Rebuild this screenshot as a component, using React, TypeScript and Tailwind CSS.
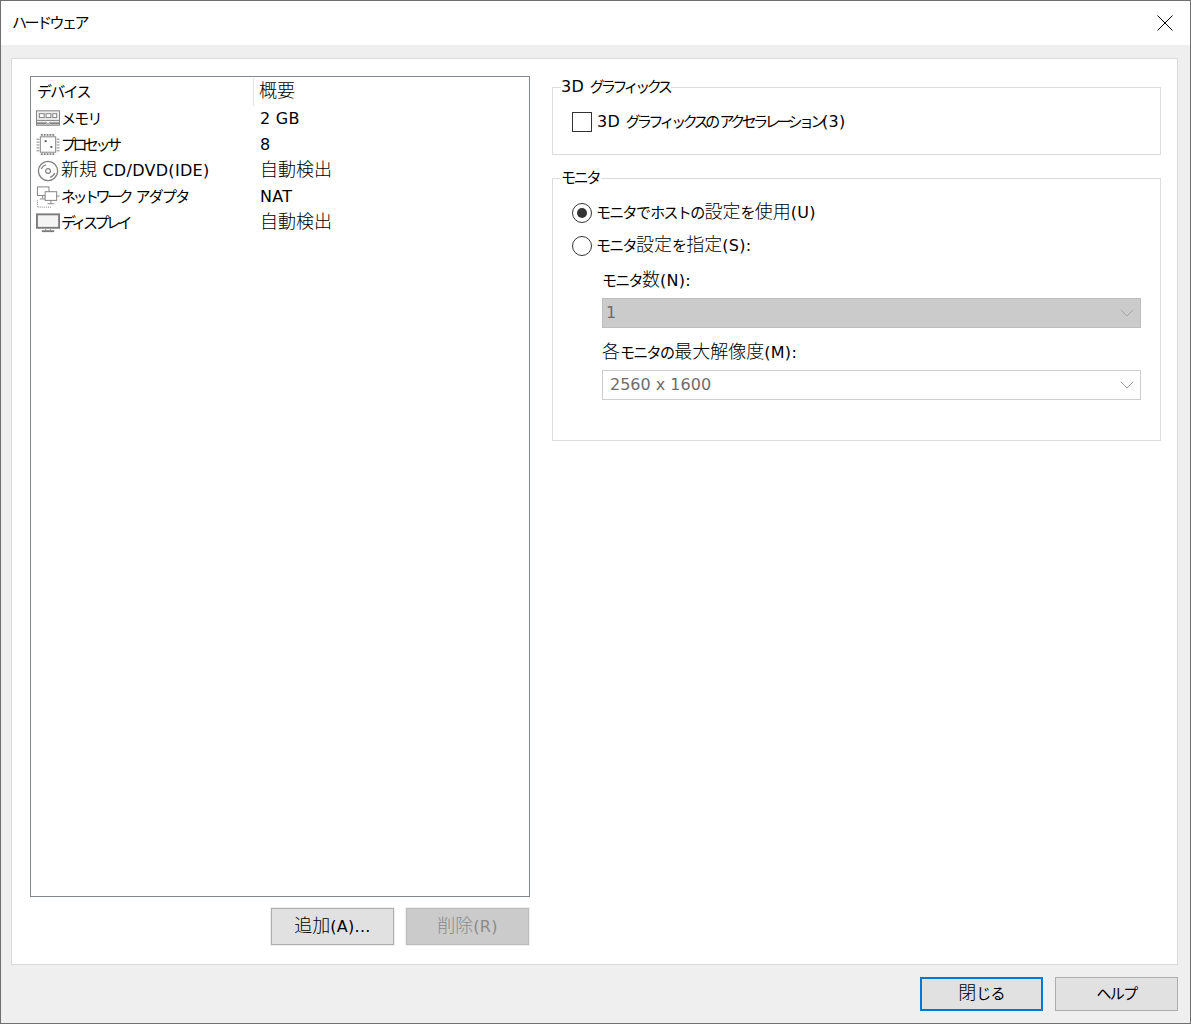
import React from 'react';
import { ChevronDown } from 'lucide-react';

const FONT = "font-['DejaVu_Sans','Noto_Sans_CJK_JP',sans-serif]";

// Meiryo UI look: narrow kana, wide kanji, Verdana-like latin
const T = ({ children, tight }: { children: string; tight?: boolean }) => {
  const runs = children.match(/[ァィゥェォッャュョ]+|[\u30a0-\u30ff]+|[\u3040-\u309f]+|[\u4e00-\u9fff]+|[^\u3040-\u30ff\u4e00-\u9fff]+/g) ?? [];
  return (
    <>
      {runs.map((run, i) => {
        if (/[ァィゥェォッャュョ]/.test(run)) {
          return <span key={i} className="text-[15px] leading-none tracking-[-3.5px]">{run}</span>;
        }
        if (/[\u30a0-\u30ff]/.test(run)) {
          return <span key={i} className={`text-[15px] leading-none ${tight ? 'tracking-[-2.3px]' : 'tracking-[-1.7px]'}`}>{run}</span>;
        }
        if (/[\u3040-\u309f]/.test(run)) {
          return <span key={i} className="text-[15px] leading-none tracking-[-0.7px]">{run}</span>;
        }
        if (/[\u4e00-\u9fff]/.test(run)) {
          return <span key={i} className="text-[18px] font-light leading-none">{run}</span>;
        }
        return <span key={i} className="text-[16px] leading-none tracking-[0.3px]">{run}</span>;
      })}
    </>
  );
};

const MemoryIcon = () => (
  <svg width="26" height="18" viewBox="0 0 26 18" fill="none" stroke="#808080" strokeWidth="1">
    <rect x="0.5" y="0.5" width="24" height="15" fill="#ededed" />
    <rect x="3.5" y="3.5" width="5" height="4" fill="#fff" />
    <rect x="10.5" y="3.5" width="5" height="4" fill="#fff" />
    <rect x="17.5" y="3.5" width="4" height="4" fill="#fff" />
    <path d="M1 10.5h23" />
    <path d="M1 13.5h23" strokeWidth="2" />
    <path d="M11 14l1.5-2 1.5 2" stroke="#fff" />
  </svg>
);

const CpuIcon = () => (
  <svg width="26" height="24" viewBox="0 0 26 24" fill="none" stroke="#808080" strokeWidth="1">
    <rect x="4.5" y="3.5" width="16" height="16" fill="#fff" />
    <rect x="9" y="7" width="2" height="2" fill="#555" stroke="none" />
    <rect x="15" y="13" width="2" height="2" fill="#555" stroke="none" />
    <path d="M6 0.5v2M9 0.5v2M12 0.5v2M15 0.5v2M18 0.5v2" strokeWidth="2" />
    <path d="M6 20.5v2M9 20.5v2M12 20.5v2M15 20.5v2M18 20.5v2" strokeWidth="2" />
    <path d="M0.5 6h3M0.5 9h3M0.5 12h3M0.5 15h3M0.5 18h3" />
    <path d="M21.5 6h3M21.5 9h3M21.5 12h3M21.5 15h3M21.5 18h3" />
  </svg>
);

const DiscIcon = () => (
  <svg width="26" height="22" viewBox="0 0 26 22" fill="none" stroke="#808080">
    <circle cx="12.5" cy="11" r="10" strokeWidth="1.4" fill="#fff" />
    <circle cx="12.5" cy="11" r="2.5" strokeWidth="1.2" />
    <path d="M5.5 9a7.5 7.5 0 0 1 5-4.5" strokeWidth="1.2" />
    <path d="M19.5 13a7.5 7.5 0 0 1-5 4.5" strokeWidth="1.2" />
  </svg>
);

const NetworkIcon = () => (
  <svg width="26" height="24" viewBox="0 0 26 24" fill="none" stroke="#808080" strokeWidth="1">
    <path d="M1.5 15.5v7h14" strokeDasharray="1 1" />
    <rect x="1.5" y="1.5" width="12" height="9" fill="#fff" />
    <path d="M7 10.5v3M4 14h7" />
    <rect x="9.5" y="6.5" width="12" height="9" fill="#fff" />
    <path d="M15.5 15.5v3M12 19h7M21.5 11h3" />
  </svg>
);

const DisplayIcon = () => (
  <svg width="26" height="20" viewBox="0 0 26 20" fill="none" stroke="#7d7d7d">
    <rect x="1" y="1" width="23" height="14" strokeWidth="2" fill="#f4f4f4" />
    <path d="M10 16.5v1.5M15 16.5v1.5" strokeWidth="1" />
    <path d="M6 18.5h13" strokeWidth="2" />
  </svg>
);

const devices = [
  { icon: <MemoryIcon />, name: 'メモリ', summary: '2 GB' },
  { icon: <CpuIcon />, name: 'プロセッサ', summary: '8' },
  { icon: <DiscIcon />, name: '新規 CD/DVD(IDE)', summary: '自動検出' },
  { icon: <NetworkIcon />, name: 'ネットワーク アダプタ', summary: 'NAT' },
  { icon: <DisplayIcon />, name: 'ディスプレイ', summary: '自動検出' },
];

const GroupBox = ({ title, className, children }: { title: string; className: string; children: React.ReactNode }) => (
  <div className={`relative border border-[#dcdcdc] ${className}`}>
    <span className="absolute left-[8px] top-[-11px] whitespace-nowrap bg-white pr-[2px] leading-[20px]">
      <T tight>{title}</T>
    </span>
    {children}
  </div>
);

const Radio = ({ checked, label }: { checked?: boolean; label: string }) => (
  <div className="flex h-[20px] items-center">
    <div className="flex h-[20px] w-[20px] items-center justify-center rounded-full border border-[#333]">
      {checked && <div className="h-[10px] w-[10px] rounded-full bg-[#333]" />}
    </div>
    <span className="ml-[4px]">
      <T>{label}</T>
    </span>
  </div>
);

const Select = ({ value, disabled }: { value: string; disabled?: boolean }) => (
  <div className={`flex h-[30px] items-center justify-between border pr-[1px] ${disabled ? 'border-[#bdbdbd] bg-[#cbcbcb] pl-[3px]' : 'border-[#cdcdcd] bg-white pl-[7px]'}`}>
    <span className="text-[16px] text-[#6d6d6d]">{value}</span>
    <ChevronDown size={24} strokeWidth={1} className="text-[#a5a5a5]" />
  </div>
);

const Button = ({ label, disabled, focused, className }: { label: string; disabled?: boolean; focused?: boolean; className: string }) => (
  <div
    className={`flex w-[123px] items-center justify-center ${className} ${
      focused
        ? 'border-[2px] border-[#0078d7] bg-[#e1e1e1]'
        : disabled
          ? 'border border-[#bdbdbd] bg-[#cbcbcb] text-[#8a8a8a]'
          : 'border border-[#adadad] bg-[#e1e1e1]'
    }`}
  >
    <span><T>{label}</T></span>
  </div>
);

export default function App() {
  return (
    <div className={`flex h-[1024px] w-[1191px] flex-col border border-[#6f6f6f] bg-[#efefef] text-black ${FONT}`}>
      {/* Title bar */}
      <div className="flex h-[44px] shrink-0 items-center justify-between bg-white pl-[11px] pr-[17px]">
        <span className="text-[15px] tracking-[-2.5px]">ハードウェア</span>
        <svg width="16" height="16" viewBox="0 0 16 16" fill="none" stroke="#000" strokeWidth="1">
          <path d="M0.5 0.5l15 15M15.5 0.5l-15 15" />
        </svg>
      </div>

      {/* Main panel */}
      <div className="ml-[10px] mr-[12px] mt-[13px] flex h-[907px] shrink-0 border border-[#d9d9d9] bg-white pl-[18px] pr-[16px] pt-[17px]">
        <div className="flex w-[500px] shrink-0 flex-col">
          {/* Device list */}
          <div className="h-[821px] border border-[#828790] pt-[1px]">
            <div className="flex h-[28px] items-center">
              <div className="flex h-full w-[223px] items-center border-r border-[#e5e5e5] pl-[6px]">
                <span><T>デバイス</T></span>
              </div>
              <div className="pl-[5px]"><T>概要</T></div>
            </div>
            {devices.map((d) => (
              <div key={d.name} className="flex h-[26px] items-center">
                <div className="flex w-[224px] items-center pl-[5px]">
                  <div className="flex w-[25px] shrink-0 items-center">{d.icon}</div>
                  <span className="whitespace-nowrap"><T>{d.name}</T></span>
                </div>
                <span className="pl-[5px]"><T>{d.summary}</T></span>
              </div>
            ))}
          </div>
          <div className="mt-[11px] flex justify-end gap-[12px] pr-[1px]">
            <Button label="追加(A)..." className="h-[37px] ring-1 ring-[#efefef]" />
            <Button label="削除(R)" disabled className="h-[37px] ring-1 ring-[#efefef]" />
          </div>
        </div>

        {/* Right column */}
        <div className="ml-[22px] flex flex-1 flex-col pt-[11px]">
          <GroupBox title="3D グラフィックス" className="h-[68px]">
            <div className="ml-[19px] mt-[24px] flex h-[20px] items-center">
              <div className="h-[20px] w-[20px] border border-[#333]" />
              <span className="ml-[5px]"><T>3D グラフィックスのアクセラレーション(3)</T></span>
            </div>
          </GroupBox>
          <GroupBox title="モニタ" className="mt-[23px] h-[263px]">
            <div className="ml-[19px] flex flex-col pt-[24px]">
              <Radio checked label="モニタでホストの設定を使用(U)" />
              <div className="mt-[13px]">
                <Radio label="モニタ設定を指定(S):" />
              </div>
              <div className="ml-[30px] mr-[19px] mt-[13px] flex flex-col">
                <span className="leading-[24px]"><T>モニタ数(N):</T></span>
                <div className="mt-[5px]">
                  <Select value="1" disabled />
                </div>
                <span className="mt-[13px] leading-[24px]"><T>各モニタの最大解像度(M):</T></span>
                <div className="mt-[5px]">
                  <Select value="2560 x 1600" />
                </div>
              </div>
            </div>
          </GroupBox>
        </div>
      </div>

      {/* Footer */}
      <div className="mr-[12px] mt-[12px] flex justify-end gap-[12px]">
        <Button label="閉じる" focused className="h-[34px]" />
        <Button label="ヘルプ" className="h-[34px]" />
      </div>
    </div>
  );
}
